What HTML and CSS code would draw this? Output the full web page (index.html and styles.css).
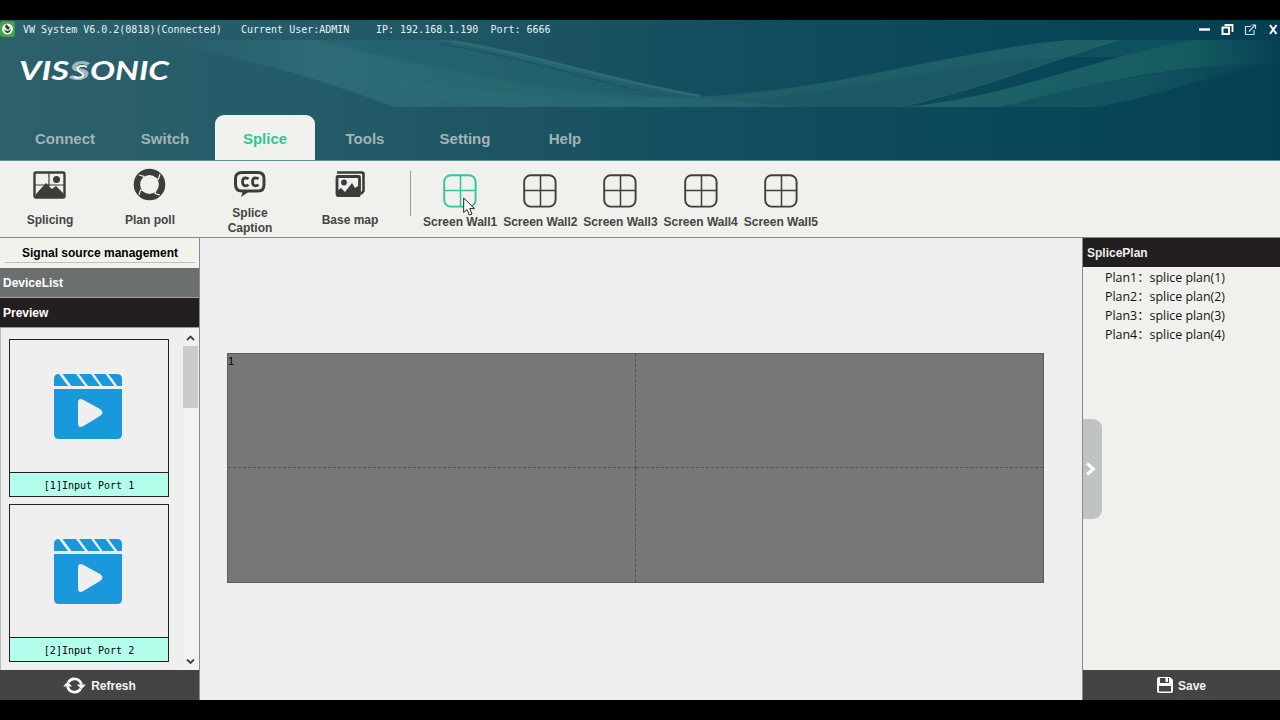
FILE: index.html
```html
<!DOCTYPE html>
<html lang="en">
<head>
  <meta charset="UTF-8" />
  <meta name="viewport" content="width=device-width, initial-scale=1.0">
  <title>VW System</title>
  <link rel="stylesheet" href="styles.css">
</head>
<body>

  <!-- shared shapes -->
  <svg class="sprite" width="0" height="0">
    <symbol id="wallIcon" viewBox="0 0 34 34">
      <rect x="1.200" y="1.200" width="31.400" height="31.400" rx="6.500" fill="none" stroke="currentColor" stroke-width="1.900"/>
      <path d="M17.500 1V33M1 16.500H33" stroke="currentColor" stroke-width="1.500"/>
    </symbol>
    <symbol id="clipIcon" viewBox="0 0 68 65">
      <path fill="#1a98dc" d="M5 0L14 12H0V5Q0 0 5 0ZM8.500 0H22L31 12H17.500ZM25 0H37L46 12H34ZM40 0H51.500L60.500 12H48.500ZM54.500 0H63Q68 0 68 5V12H63.500ZM0 15H68V60Q68 65 63 65H5Q0 65 0 60Z"/>
      <path fill="#efefef" d="M24 29Q24 23 29.500 26L46 35Q51 38.500 46 42L29.500 52Q24 55 24 49Z"/>
    </symbol>
  </svg>

  <div class="app">
    <header class="header">
      <svg class="waves" viewBox="0 0 1280 141">
        <defs>
          <linearGradient id="fadeLeft" x1="0" x2="1">
            <stop offset="0" stop-color="#2f6c78" stop-opacity="0"/>
            <stop offset=".25" stop-color="#2f6e7a" stop-opacity=".8"/>
            <stop offset=".65" stop-color="#27686f" stop-opacity=".9"/>
            <stop offset="1" stop-color="#1b5864"/>
          </linearGradient>
          <linearGradient id="fadeRight" x1="0" x2="1">
            <stop offset="0" stop-color="#20636b"/>
            <stop offset=".75" stop-color="#155c60"/>
            <stop offset="1" stop-color="#155c60" stop-opacity="0"/>
          </linearGradient>
          <linearGradient id="fadeUnder" x1="0" x2="1">
            <stop offset="0" stop-color="#11535e"/>
            <stop offset=".5" stop-color="#11535e"/>
            <stop offset="1" stop-color="#11535e" stop-opacity="0"/>
          </linearGradient>
        </defs>
        <path fill="url(#fadeLeft)" d="M155 20H445C530 32 610 60 700 77C735 78 760 74 800 67V87H395C340 68 290 47 155 20Z"/>
        <path fill="#1a5a68" opacity=".4" d="M320 20H435C520 34 590 60 690 77C580 78 450 55 320 20Z"/>
        <path fill="none" stroke="#2c6c77" stroke-width="2.500" d="M450 21C540 35 610 61 700 76"/>
        <path fill="none" stroke="#17525f" stroke-width="1" d="M440 24C520 37 580 57 640 71"/>
        <path fill="#2e6f79" opacity=".35" d="M350 45C440 75 560 79 700 77L800 87H480C430 80 390 65 350 45Z"/>
        <path fill="#1b5864" d="M799.500 67C890 52 980 29 1070 20H1118C1040 46 970 70 900 87H799.500Z"/>
        <path fill="#206168" opacity=".75" d="M690 77C850 70 980 25 1070 20H1118C1090 29 1070 36 1055 38C960 42 870 67 750 80Z"/>
        <path fill="#0f505e" d="M1118 20H1195C1170 28 1150 34 1130 37H1067Z"/>
        <path fill="none" stroke="#23656b" stroke-width="1" d="M1118 20C1030 47 990 66 900 87"/>
        <path fill="url(#fadeUnder)" d="M1000 87C1080 65 1170 48 1280 39C1200 58 1160 76 1095 87Z"/>
        <path fill="url(#fadeRight)" d="M905 87C1020 75 1090 38 1195 20H1280V43C1180 43 1090 64 1000 87Z"/>
      </svg>
      <div class="title-bar">
        <svg class="app-icon" viewBox="0 0 16 16">
          <rect x="0" y="0" width="15" height="16" rx="3" fill="#44a34b"/>
          <circle cx="7.500" cy="8" r="5.500" fill="#f1f6ef"/>
          <path d="M6 3L10 7L8 9L5 6ZM4 8Q7 12 11 8Q10 12 7.500 12T4 8Z" fill="#25442b"/>
        </svg>
        <span class="title-text">VW System V6.0.2(0818)(Connected)</span>
        <span class="title-user">Current User:ADMIN</span>
        <span class="title-ip">IP: 192.168.1.190&nbsp; Port: 6666</span>
        <svg class="window-buttons" viewBox="0 0 84 14">
          <path d="M3 7.500H14" stroke="#fff" stroke-width="2.400"/>
          <path d="M28.500 3H36.500V10" stroke="#fff" stroke-width="1.800" fill="none"/>
          <rect x="26.500" y="5.500" width="6.500" height="6.500" stroke="#fff" stroke-width="2" fill="none"/>
          <path d="M55 4.500H49.500V12.500H58V8M53 9.500L59 3M55.500 3H59.500V7" stroke="#c3dde0" stroke-width="1.200" fill="none"/>
          <path d="M74 3L80.500 12M80.500 3L74 12" stroke="#fff" stroke-width="2"/>
        </svg>
      </div>
      <svg class="logo" viewBox="0 0 160 40">
        <g class="logo-text">
          <text x="0" y="30" textLength="50" lengthAdjust="spacingAndGlyphs">VIS</text>
          <text x="50" y="30" class="logo-swirl" textLength="21" lengthAdjust="spacingAndGlyphs">S</text>
          <text x="71" y="30" textLength="79" lengthAdjust="spacingAndGlyphs">ONIC</text>
        </g>
        <path d="M68 17C60 14 55 19 61 22S64 29 55 27" fill="none" stroke="#fff" stroke-width="1.800"/>
      </svg>
      <nav class="tabs">
        <a class="tab">Connect</a>
        <a class="tab">Switch</a>
        <a class="tab active">Splice</a>
        <a class="tab">Tools</a>
        <a class="tab">Setting</a>
        <a class="tab">Help</a>
      </nav>
    </header>

    <div class="toolbar">
      <div class="tool">
        <svg viewBox="0 0 34 34">
          <rect x="1.500" y="4.500" width="30" height="25" rx="1.500" fill="none" stroke="#3c3c3a" stroke-width="2.400"/>
          <path d="M16 5V18M2 17H31" stroke="#3c3c3a" stroke-width="1.200"/>
          <circle cx="23.500" cy="11.500" r="3.500" fill="#3c3c3a"/>
          <path d="M3 26L13 15L19 21L23 18L31 26V30H2Z" fill="#3c3c3a"/>
        </svg>
        <span>Splicing</span>
      </div>
      <div class="tool">
        <svg viewBox="0 0 34 34">
          <circle cx="16.500" cy="16.500" r="12.600" fill="none" stroke="#3c3c3a" stroke-width="6.400"/>
          <path d="M6 7L11 8.500L10 12M27 6L25.500 11L21.500 10.500M27 27L22 25.500L23 21.500M6 27L7.500 22L11.500 23" fill="none" stroke="#f0f1ec" stroke-width="1.200"/>
        </svg>
        <span>Plan poll</span>
      </div>
      <div class="tool">
        <svg viewBox="0 0 34 34">
          <path d="M9 4.500H25Q31 4.500 31 10.500V16.500Q31 23 25 23H9Q2.500 23 2.500 16.500V10.500Q2.500 4.500 9 4.500Z" fill="none" stroke="#3c3c3a" stroke-width="3"/>
          <path d="M8 29L10 23H17Z" fill="#3c3c3a"/>
          <path d="M15.500 11Q14.500 9.800 12.500 9.800Q9.500 9.800 9.500 13.800T12.500 17.800Q14.500 17.800 15.500 16.600M25.500 11Q24.500 9.800 22.500 9.800Q19.500 9.800 19.500 13.800T22.500 17.800Q24.500 17.800 25.500 16.600" fill="none" stroke="#3c3c3a" stroke-width="2.800"/>
        </svg>
        <span>Splice<br>Caption</span>
      </div>
      <div class="tool">
        <svg viewBox="0 0 34 34">
          <path d="M4 4.500H29Q30.500 4.500 30.500 6V23L28 26" fill="none" stroke="#3c3c3a" stroke-width="2.600"/>
          <rect x="4" y="8.500" width="22.500" height="19" rx="1" fill="#f0f1ec" stroke="#3c3c3a" stroke-width="2.800"/>
          <circle cx="11" cy="14.500" r="2.900" fill="#3c3c3a"/>
          <path d="M4 23L8 20L12 24L19 15L22 20L25 18L27 22V29H4Z" fill="#3c3c3a"/>
        </svg>
        <span>Base map</span>
      </div>
      <div class="divider"></div>
      <div class="wall-btn selected">
        <svg><use href="#wallIcon"/></svg>
        <span>Screen Wall1</span>
        <svg class="cursor" viewBox="0 0 13 19">
          <path d="M.7 1V15.500L4 12.500L6.300 18L9 17L6.700 11.600H11.500Z" fill="#fff" stroke="#222" stroke-width="1"/>
        </svg>
      </div>
      <div class="wall-btn"><svg><use href="#wallIcon"/></svg><span>Screen Wall2</span></div>
      <div class="wall-btn"><svg><use href="#wallIcon"/></svg><span>Screen Wall3</span></div>
      <div class="wall-btn"><svg><use href="#wallIcon"/></svg><span>Screen Wall4</span></div>
      <div class="wall-btn"><svg><use href="#wallIcon"/></svg><span>Screen Wall5</span></div>
    </div>

    <main class="content">
      <aside class="sources">
        <div class="sources-title"><span>Signal source management</span></div>
        <div class="section device">DeviceList</div>
        <div class="section preview">Preview</div>
        <div class="preview-list">
          <div class="cards">
            <div class="card">
              <div class="thumb"><svg><use href="#clipIcon"/></svg></div>
              <div class="card-name">[1]Input Port 1</div>
            </div>
            <div class="card">
              <div class="thumb"><svg><use href="#clipIcon"/></svg></div>
              <div class="card-name">[2]Input Port 2</div>
            </div>
          </div>
          <div class="scrollbar">
            <svg viewBox="0 0 15 16"><path d="M4 10L7.500 6.500L11 10" fill="none" stroke="#444" stroke-width="1.800"/></svg>
            <div class="scroll-thumb"></div>
            <svg viewBox="0 0 15 16"><path d="M4 6.500L7.500 10L11 6.500" fill="none" stroke="#444" stroke-width="1.800"/></svg>
          </div>
        </div>
        <div class="bottom-btn">
          <svg class="refresh-icon" viewBox="0 0 24 20">
            <path d="M5.500 6.500A7.600 7.600 0 0 1 19.300 9M18.500 13.500A7.600 7.600 0 0 1 4.700 11" fill="none" stroke="#fff" stroke-width="2.900"/>
            <path d="M14.500 9H24L19.300 14ZM0 11H9.500L4.700 6Z" fill="#fff"/>
          </svg>
          <span>Refresh</span>
        </div>
      </aside>

      <section class="canvas">
        <div class="screen-wall">
          <div class="cell">1</div>
          <div class="cell"></div>
          <div class="cell"></div>
          <div class="cell"></div>
        </div>
      </section>

      <aside class="plans">
        <div class="plans-title">SplicePlan</div>
        <ul class="plan-list">
          <li>Plan1：splice plan(1)</li>
          <li>Plan2：splice plan(2)</li>
          <li>Plan3：splice plan(3)</li>
          <li>Plan4：splice plan(4)</li>
        </ul>
        <div class="collapse">
          <svg viewBox="0 0 12 14"><path d="M2 1.500L8.500 7L2 12.500" fill="none" stroke="#fff" stroke-width="3"/></svg>
        </div>
        <div class="bottom-btn">
          <svg class="save-icon" viewBox="0 0 16 16">
            <path d="M2 0H13L16 3V14Q16 16 14 16H2Q0 16 0 14V2Q0 0 2 0Z" fill="#fff"/>
            <path d="M3 1H12V6H3ZM2 9H14V14.500H2Z" fill="#444"/>
            <path d="M8.500 1H11V5H8.500Z" fill="#fff"/>
          </svg>
          <span>Save</span>
        </div>
      </aside>
    </main>
  </div>

</body>
</html>
```

FILE: styles.css
```css
* {
  box-sizing: border-box;
}
body {
  margin: 0;
  background: #000;
  font-family: "Liberation Sans", Arial, sans-serif;
  font-size: 12px;
  overflow: hidden;
}
svg {
  display: block;
  flex: none;
}
.sprite {
  position: absolute;
}
.app {
  display: flex;
  flex-direction: column;
  height: 720px;
  padding: 20px 0;
}

/* header */
.header {
  position: relative;
  display: flex;
  flex-direction: column;
  height: 141px;
  background: linear-gradient(90deg, #2c606c 0%, #245b68 25%, #17505f 50%, #0b485a 75%, #053f53 100%);
  border-bottom: 1px solid #5f8b92;
}
.waves {
  position: absolute;
  left: 0;
  top: 0;
  width: 1280px;
  height: 141px;
}
.title-bar {
  position: relative;
  display: flex;
  align-items: center;
  height: 19px;
  font-family: "DejaVu Sans Mono", monospace;
  font-size: 10px;
  color: #e8f2f3;
  white-space: pre;
}
.app-icon {
  width: 16px;
  height: 16px;
}
.title-text {
  margin-left: 7px;
  width: 218px;
}
.title-user {
  width: 135px;
}
.window-buttons {
  width: 84px;
  height: 14px;
  margin-left: auto;
}
.logo {
  position: relative;
  width: 160px;
  height: 40px;
  margin: 12px 0 0 19px;
}
.logo-text {
  font-family: Lato, sans-serif;
  font-size: 26px;
  font-style: italic;
  font-weight: bold;
  fill: #fff;
}
.logo-swirl {
  fill: #9fb7be;
  font-weight: 900;
}
.tabs {
  position: relative;
  display: flex;
  margin: 25px 0 0 15px;
}
.tab {
  width: 100px;
  height: 44px;
  line-height: 47px;
  text-align: center;
  font-size: 15px;
  font-weight: bold;
  color: #a3b4b6;
}
.tab.active {
  height: 45px;
  background: #f1f2ee;
  border-radius: 9px 9px 0 0;
  color: #2fc795;
}

/* toolbar */
.toolbar {
  display: flex;
  height: 77px;
  background: #f0f1ec;
  border-bottom: 1px solid #85877f;
  font-weight: bold;
  color: #444;
}
.tool {
  display: flex;
  flex-direction: column;
  align-items: center;
  width: 100px;
  padding-top: 7px;
  text-align: center;
  line-height: 15px;
}
.tool svg {
  width: 34px;
  height: 34px;
}
.tool span {
  display: flex;
  align-items: center;
  height: 38px;
  margin-top: 2px;
}
.divider {
  width: 1px;
  height: 45px;
  margin: 10px 9px 0 10px;
  background: #999b96;
}
.wall-btn {
  position: relative;
  display: flex;
  flex-direction: column;
  align-items: center;
  width: 80.2px;
  padding-top: 13px;
  white-space: nowrap;
}
.wall-btn svg {
  width: 34px;
  height: 34px;
  color: #3e403a;
}
.wall-btn span {
  margin-top: 7px;
}
.wall-btn.selected svg {
  color: #35c49a;
}
.wall-btn .cursor {
  position: absolute;
  left: 43px;
  top: 36px;
  width: 13px;
  height: 19px;
}

/* content */
.content {
  display: flex;
  flex: 1;
  background: #efefef;
}
.sources {
  display: flex;
  flex-direction: column;
  width: 200px;
  border-right: 1px solid #8b8b8b;
}
.sources-title {
  height: 30px;
  padding: 0 4px 0 5px;
  background: #f1f2ec;
  font-weight: bold;
  text-align: center;
}
.sources-title span {
  display: block;
  height: 25px;
  line-height: 30px;
  border-bottom: 1px solid #bfc1bb;
}
.section {
  height: 30px;
  padding-left: 3px;
  line-height: 30px;
  font-weight: bold;
  color: #fff;
}
.device {
  background: #6c6f6f;
  border-bottom: 1px solid #a0a0a0;
}
.preview {
  background: #231f20;
  border-bottom: 1px solid #999;
}
.preview-list {
  display: flex;
  justify-content: space-between;
  flex: 1;
  border-left: 1px solid #bbb;
}
.cards {
  display: flex;
  flex-direction: column;
  gap: 7px;
  padding: 11px 0 0 8px;
}
.card {
  display: flex;
  flex-direction: column;
  width: 160px;
  height: 158px;
  border: 1px solid #222;
}
.thumb {
  flex: 1;
  padding: 34px 0 0 44px;
}
.thumb svg {
  width: 68px;
  height: 65px;
}
.card-name {
  height: 24px;
  border-top: 1px solid #222;
  background: #b4ffec;
  font-family: "DejaVu Sans Mono", monospace;
  font-size: 10px;
  line-height: 25px;
  text-align: center;
}
.scrollbar {
  display: flex;
  flex-direction: column;
  width: 16px;
  padding: 2px 1px 1px 0;
  background: #f2f2f2;
}
.scrollbar svg {
  width: 15px;
  height: 16px;
}
.scroll-thumb {
  height: 62px;
  margin-bottom: auto;
  background: #cbcbcb;
}
.bottom-btn {
  display: flex;
  align-items: center;
  justify-content: center;
  gap: 5px;
  height: 30px;
  background: #444;
  color: #f4f4f4;
  font-weight: bold;
}
.bottom-btn span {
  padding-top: 2px;
}
.refresh-icon {
  width: 23px;
  height: 19px;
}
.save-icon {
  width: 16px;
  height: 16px;
}

.canvas {
  width: 882px;
  padding: 115px 0 0 27px;
}
.screen-wall {
  display: grid;
  grid-template-columns: 408px 1fr;
  grid-template-rows: 114px 1fr;
  width: 817px;
  height: 230px;
  background: #777;
  border: 1px solid #5c5c5c;
}
.cell {
  padding: 1px 0;
  font-size: 11px;
}
.cell:nth-child(odd) {
  border-right: 1px dashed #555;
}
.cell:nth-child(-n+2) {
  border-bottom: 1px dashed #555;
}

.plans {
  position: relative;
  display: flex;
  flex-direction: column;
  width: 198px;
  background: #f0f1ec;
  border-left: 1px solid #8b8b8b;
}
.plans-title {
  height: 29px;
  padding-left: 4px;
  line-height: 30px;
  background: #231f20;
  color: #eee;
  font-weight: bold;
}
.plan-list {
  flex: 1;
  margin: 0;
  padding: 1px 0 0 22px;
  list-style: none;
  font-family: "Open Sans", "Noto Sans CJK SC", sans-serif;
  font-size: 12.4px;
  line-height: 19px;
  color: #111;
}
.collapse {
  position: absolute;
  left: 0;
  top: 181px;
  display: flex;
  align-items: center;
  width: 19px;
  height: 100px;
  padding-left: 2px;
  background: #bfc4c2;
  border-radius: 0 9px 9px 0;
}
.collapse svg {
  width: 12px;
  height: 14px;
}
```
